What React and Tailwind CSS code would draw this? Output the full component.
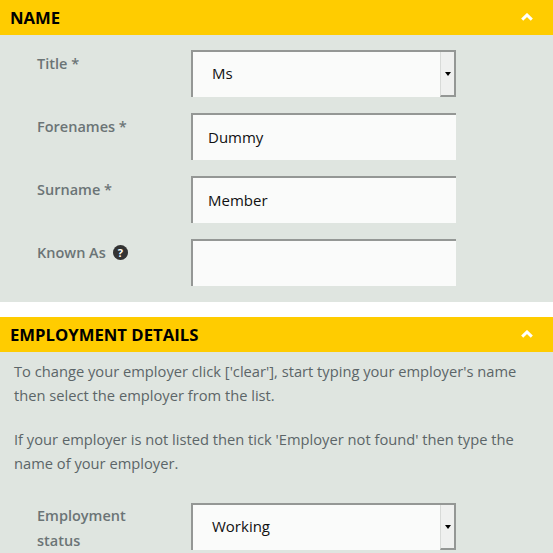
import React from 'react';

const SectionHeader = ({ title }) => (
  <div className="h-[35px] bg-[#ffcc00] flex items-center justify-between pl-[10px] pr-[20px]">
    <h2 className="text-[16.7px] font-bold text-black leading-[18px]">{title}</h2>
    <svg width="12" height="8" viewBox="0 0 12 8" fill="none" className="mt-[-1px]">
      <path d="M1.2 6.6 L6 2 L10.8 6.6" stroke="#ffffff" strokeWidth="3" />
    </svg>
  </div>
);

const fieldBox = 'w-[265px] h-[47px] bg-[#fafbfa] border-t-2 border-l-2 border-[#949795]';

const SelectField = ({ value }) => (
  <div className={`${fieldBox} flex shrink-0`}>
    <div className="flex-1 pl-[19px] pb-[2px] flex items-center text-[15px] text-[#111]">{value}</div>
    <div className="w-[16px] bg-[#eff0ef] border-l border-[#d8dad8] border-r-2 border-b-2 border-r-[#949795] border-b-[#949795] flex items-center justify-center">
      <span className="w-0 h-0 border-l-[3px] border-r-[3px] border-t-[4px] border-l-transparent border-r-transparent border-t-black" />
    </div>
  </div>
);

const TextField = ({ value }) => (
  <input
    readOnly
    value={value}
    className={`${fieldBox} shrink-0 pl-[15px] pb-[2px] text-[15px] text-[#111] outline-none`}
  />
);

const Row = ({ label, icon, className, labelClass, children }) => (
  <div className={`flex ${className || ''}`}>
    <div className={`w-[154px] shrink-0 flex items-start gap-[7px] text-[14.5px] font-semibold text-[#6b7476] leading-[25px] ${labelClass || 'pt-[1px]'}`}>
      <span>{label}</span>
      {icon}
    </div>
    {children}
  </div>
);

const App = () => (
  <div className="w-[553px] h-[553px] overflow-hidden bg-white font-['Open_Sans',sans-serif]">
    <SectionHeader title="NAME" />
    <div className="h-[267px] bg-[#dfe5e0] pl-[37px] pt-[15px]">
      <Row label="Title *" className="mb-[16px]">
        <SelectField value="Ms" />
      </Row>
      <Row label="Forenames *" className="mb-[16px]">
        <TextField value="Dummy" />
      </Row>
      <Row label="Surname *" className="mb-[16px]">
        <TextField value="Member" />
      </Row>
      <Row
        label="Known As"
        icon={
          <span className="mt-[5px] w-[15px] h-[15px] rounded-full bg-[#333] text-white text-[11px] font-bold leading-[15px] text-center">?</span>
        }
      >
        <TextField value="" />
      </Row>
    </div>

    <div className="h-[15px]" />

    <SectionHeader title="EMPLOYMENT DETAILS" />
    <div className="h-[201px] bg-[#dfe5e0]">
      <div className="pl-[14px] pr-[20px] pt-[7px] text-[14.7px] leading-[24px] text-[#5c6568]">
        <p className="mb-[20px]">
          To change your employer click ['clear'], start typing your employer's name then select the employer from the list.
        </p>
        <p>
          If your employer is not listed then tick 'Employer not found' then type the name of your employer.
        </p>
      </div>
      <Row label={<>Employment<br />status</>} className="pl-[37px] mt-[28px]" labelClass="pt-0">
        <SelectField value="Working" />
      </Row>
    </div>
  </div>
);

export default App;
